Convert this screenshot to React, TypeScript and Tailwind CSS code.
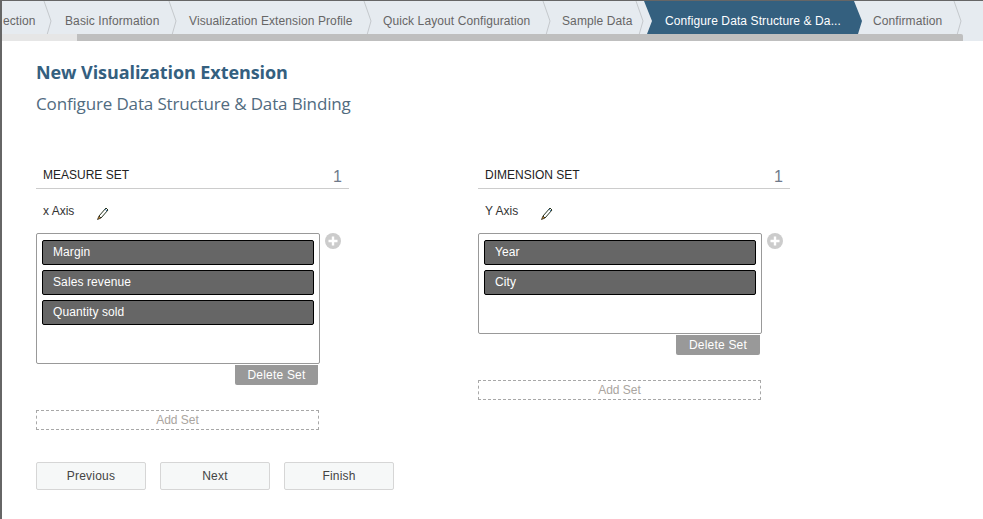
const steps = [
  { label: "ection", width: 50, text: "pl-[1px]" },
  { label: "Basic Information", width: 125, text: "pl-[13px]" },
  { label: "Visualization Extension Profile", width: 195, text: "pl-[12px]" },
  { label: "Quick Layout Configuration", width: 179, text: "pl-[11px]" },
  { label: "Sample Data", width: 93, text: "pl-[11px]" },
];

function Chevron() {
  return (
    <svg
      className="absolute right-0 top-0 h-[34px] w-[9px] overflow-visible"
      viewBox="0 0 9 34"
      fill="none"
    >
      <path d="M1 0 L8 20 L4 34" stroke="#c4c8cc" strokeWidth="1" />
    </svg>
  );
}

function Step({ label, width, text }: { label: string; width: number; text: string }) {
  return (
    <div
      className={`relative flex h-[33px] shrink-0 items-center pt-[7px] text-xs text-[#666666] ${text}`}
      style={{ width }}
    >
      <span className="whitespace-nowrap tracking-[0.1px]">{label}</span>
      <Chevron />
    </div>
  );
}

function ActiveStep() {
  return (
    <div className="relative flex h-[33px] w-[218px] shrink-0 items-center pl-[21px] pt-[7px] text-xs text-white">
      <svg className="absolute left-0 top-0 h-[33px] w-[218px]" viewBox="0 0 218 33">
        <path d="M0 0 H210 L218 20 L214 33 H3 L8 20 Z" fill="#34607f" />
      </svg>
      <span className="relative whitespace-nowrap tracking-[0.1px]">
        Configure Data Structure &amp; Da...
      </span>
    </div>
  );
}

function PencilIcon() {
  return (
    <svg width="13" height="15" viewBox="0 0 13 15" fill="none" className="mt-[5px]">
      <path d="M3 10 L10 2 L12 4 L5 12 Z" fill="#fff" stroke="#26331f" strokeWidth="1" />
      <path d="M3 10 L1.5 13.5 L5 12 Z" fill="#c98a2c" stroke="#2e2a1e" strokeWidth="0.8" />
      <path d="M9 3.2 L11 5" stroke="#4a7fb0" strokeWidth="1" />
    </svg>
  );
}

function PlusIcon() {
  return (
    <svg width="16" height="16" viewBox="0 0 16 16" className="shrink-0">
      <circle cx="8" cy="8" r="8" fill="#cccccc" />
      <path d="M8 3.5 V12.5 M3.5 8 H12.5" stroke="#ffffff" strokeWidth="2.4" />
    </svg>
  );
}

function SetColumn({
  title,
  axis,
  items,
  width,
  boxHeight,
  deleteWidth,
}: {
  title: string;
  axis: string;
  items: string[];
  width: string;
  boxHeight: string;
  deleteWidth: string;
}) {
  return (
    <div className={`shrink-0 ${width}`}>
      <div className="flex h-[28px] items-start justify-between border-b border-[#cccccc] px-[7px] pt-[6px]">
        <span className="text-xs leading-[16px] text-[#222222]">{title}</span>
        <span className="pt-[1px] text-base leading-[18px] text-[#6f7a8a]">1</span>
      </div>
      <div className="mt-[9px] flex h-[26px] items-center gap-[22px] pl-[7px]">
        <span className="text-xs text-[#333333]">{axis}</span>
        <PencilIcon />
      </div>
      <div className="mt-[9px] flex gap-[5px]">
        <div
          className={`flex w-[284px] shrink-0 flex-col gap-[5px] rounded-[2px] border border-[#999999] px-[5px] pt-[6px] ${boxHeight}`}
        >
          {items.map((item) => (
            <div
              key={item}
              className="flex h-[25px] shrink-0 items-center rounded-[2px] border border-black bg-[#666666] pb-[1px] pl-[10px] text-xs tracking-[0.1px] text-white"
            >
              {item}
            </div>
          ))}
        </div>
        <PlusIcon />
      </div>
      <div className="flex w-[282px] justify-end">
        <div
          className={`mt-px flex h-[20px] items-center justify-center rounded-b-[2px] bg-[#999999] text-xs tracking-[0.2px] text-white ${deleteWidth}`}
        >
          Delete Set
        </div>
      </div>
      <div className="mt-[25px] flex h-[20px] w-[283px] items-center justify-center border border-dashed border-[#a8a8a8] text-xs text-[#aaa5a0]">
        Add Set
      </div>
    </div>
  );
}

function NavButton({ label }: { label: string }) {
  return (
    <button className="h-[28px] w-[110px] rounded-[2px] border border-[#d6d6d6] bg-[#f6f8f8] text-xs tracking-[0.2px] text-[#444444]">
      {label}
    </button>
  );
}

export default function App() {
  return (
    <div className="h-[519px] w-[983px] overflow-hidden border-l-2 border-t border-l-[#666666] border-t-[#666666] bg-white font-['Liberation_Sans',sans-serif]">
      <div className="h-[40px] bg-[#e6ebf0]">
        <div className="flex h-[33px] overflow-hidden">
          {steps.map((s) => (
            <Step key={s.label} {...s} />
          ))}
          <ActiveStep />
          <Step label="Confirmation" width={100} text="pl-[11px]" />
        </div>
        <div className="flex h-[7px] w-[961px]">
          <div className="w-[75px] bg-[#e6e6e6]" />
          <div className="flex-1 rounded-tr-[2px] bg-[#bfbfbf]" />
        </div>
      </div>

      <div className="pl-[34px]">
        <h1 className="mt-[19px] font-['Open_Sans',sans-serif] text-lg font-bold leading-[24px] tracking-[-0.08px] text-[#34607f]">
          New Visualization Extension
        </h1>
        <h2 className="mt-[8px] font-['Open_Sans',sans-serif] text-[17px] leading-[24px] tracking-[-0.15px] text-[#516b80]">
          Configure Data Structure &amp; Data Binding
        </h2>

        <div className="mt-[45px] flex h-[301px] items-start gap-[129px]">
          <SetColumn
            title="MEASURE SET"
            axis="x Axis"
            items={["Margin", "Sales revenue", "Quantity sold"]}
            width="w-[313px]"
            boxHeight="h-[131px]"
            deleteWidth="w-[83px]"
          />
          <SetColumn
            title="DIMENSION SET"
            axis="Y Axis"
            items={["Year", "City"]}
            width="w-[312px]"
            boxHeight="h-[101px]"
            deleteWidth="w-[84px]"
          />
        </div>

        <div className="flex gap-[14px]">
          <NavButton label="Previous" />
          <NavButton label="Next" />
          <NavButton label="Finish" />
        </div>
      </div>
    </div>
  );
}
